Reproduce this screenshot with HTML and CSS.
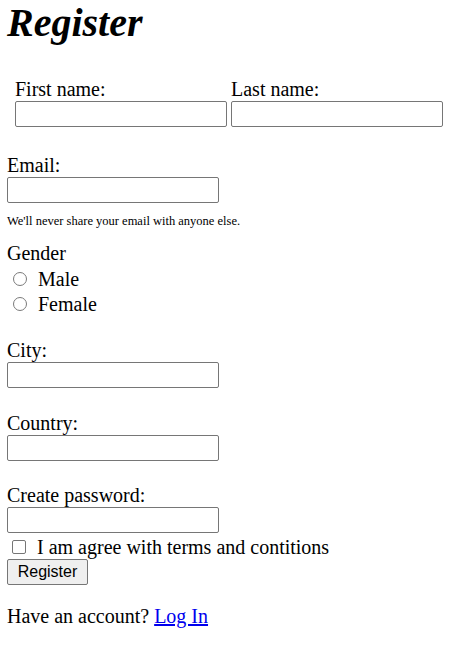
FILE: index.html
```html
<!DOCTYPE html>
<html lang="en">
<head>
<meta charset="utf-8">
<title>Register</title>
<link rel="stylesheet" href="styles.css">
</head>
<body>
<main class="page">
  <h1 class="title">Register</h1>
  <form class="form">
    <div class="name-row">
      <div class="field">
        <label class="label" for="first">First name:</label>
        <input class="input" id="first" type="text">
      </div>
      <div class="field">
        <label class="label" for="last">Last name:</label>
        <input class="input" id="last" type="text">
      </div>
    </div>
    <div class="group group-email">
      <label class="label" for="email">Email:</label>
      <input class="input" id="email" type="email">
    </div>
    <small class="hint">We'll never share your email with anyone else.</small>
    <div class="gender">
      <div class="label">Gender</div>
      <label class="radio-row radio-first"><input class="radio" type="radio" name="g"> Male</label>
      <label class="radio-row"><input class="radio" type="radio" name="g"> Female</label>
    </div>
    <div class="group group-city">
      <label class="label" for="city">City:</label>
      <input class="input" id="city" type="text">
    </div>
    <div class="group group-country">
      <label class="label" for="country">Country:</label>
      <input class="input" id="country" type="text">
    </div>
    <div class="group group-pass">
      <label class="label" for="pass">Create password:</label>
      <input class="input" id="pass" type="password">
    </div>
    <label class="check-row"><input class="check" type="checkbox"> I am agree with terms and contitions</label>
    <button class="btn" type="button">Register</button>
  </form>
  <p class="footer">Have an account? <a class="link" href="#">Log In</a></p>
</main>
</body>
</html>
```
FILE: styles.css
```css
html, body {
  margin: 0;
  padding: 0;
  background: #ffffff;
}
body {
  font-family: "Liberation Serif", "Times New Roman", serif;
  font-size: 20px;
  line-height: 23px;
  color: #000000;
}
.page {
  padding: 0 7px;
}
.title {
  margin: 0;
  font-size: 40px;
  line-height: 46px;
  font-weight: bold;
  font-style: italic;
}
.form {
  display: flex;
  flex-direction: column;
  align-items: flex-start;
}
.name-row {
  display: flex;
  gap: 4px;
  padding-left: 8px;
  margin-top: 32px;
}
.label {
  display: block;
  height: 23px;
}
.input {
  display: block;
  box-sizing: border-box;
  width: 212px;
  height: 26px;
  margin: 0;
  border: 1px solid #767676;
  border-radius: 2px;
  background: #ffffff;
  padding: 1px 3px;
  font-size: 16px;
}
.group-email { margin-top: 27px; }
.hint {
  display: block;
  margin-top: 11px;
  font-size: 12.5px;
  line-height: 15px;
}
.gender {
  margin-top: 13px;
  display: flex;
  flex-direction: column;
}
.radio-row {
  display: block;
  line-height: 25px;
  height: 25px;
}
.radio-first { margin-top: 2px; }
.radio {
  appearance: none;
  -webkit-appearance: none;
  display: inline-block;
  box-sizing: border-box;
  width: 14px;
  height: 14px;
  margin: 0 6px 0 6px;
  border: 1px solid #7a7a7a;
  border-radius: 50%;
  background: #ffffff;
  vertical-align: baseline;
}
.group-city { margin-top: 22px; }
.group-country { margin-top: 24px; }
.group-pass { margin-top: 23px; }
.check-row {
  display: block;
  margin-top: 3px;
  height: 23px;
}
.check {
  appearance: none;
  -webkit-appearance: none;
  display: inline-block;
  box-sizing: border-box;
  width: 14px;
  height: 14px;
  margin: 0 6px 0 5px;
  border: 1px solid #767676;
  border-radius: 2px;
  background: #ffffff;
  vertical-align: baseline;
}
.btn {
  margin-top: 0;
  box-sizing: border-box;
  width: 81px;
  height: 26px;
  padding: 0;
  border: 1px solid #767676;
  border-radius: 2px;
  background: #efefef;
  font-family: "Liberation Sans", Arial, sans-serif;
  font-size: 16px;
  color: #000000;
}
.footer {
  margin: 20px 0 0 0;
}
.link {
  color: #0000ee;
  text-decoration: underline;
}
```
